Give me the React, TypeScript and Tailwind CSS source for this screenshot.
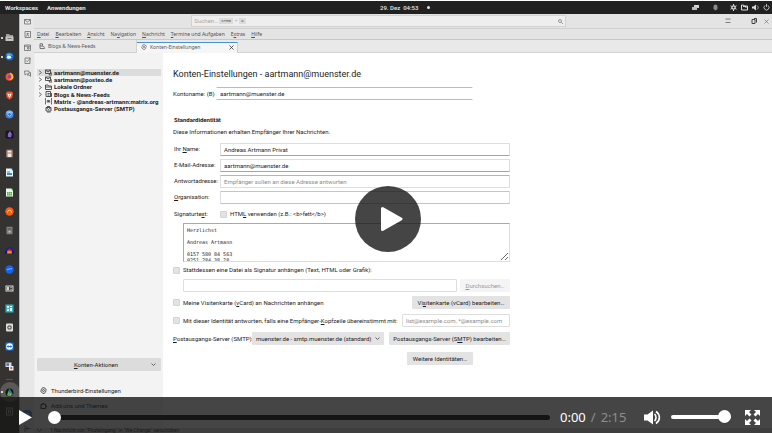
import React from "react";

const Key = ({ children }: { children: React.ReactNode }) => <span className="underline underline-offset-1">{children}</span>;

/* ---------- top panel of the desktop ---------- */

function TopBar() {
  return (
    <header className="mt-px flex h-[13px] shrink-0 items-center bg-[#212121] font-bold text-[#e6e6e6]">
      <div className="flex flex-[380] gap-[9px] pl-[5px]">
        <span>Workspaces</span>
        <span>Anwendungen</span>
      </div>
      <div className="flex items-center gap-[9px]">
        <span className="font-medium">29. Dez&nbsp; 04:53</span>
        <span className="size-[3px] rounded-full bg-[#e6e6e6]" />
      </div>
      <div className="flex flex-[344] items-center justify-end pr-[2px]">
        <svg className="mr-[13px] size-[7px]" viewBox="0 0 7 7" fill="#d5d5d5">
          <path d="M2 1h5v3H2z" />
          <path d="M0 3h5v3H0z" fill="#bbb" />
        </svg>
        <svg className="mr-[11px] size-[7px]" viewBox="0 0 7 7" fill="#8a8a8a">
          <path d="M3.500.5c1.400 0 2 1 2 2.500v2l-2 1.500-2-1.500V3C1.500 1.500 2.100.5 3.500.5z" />
        </svg>
        <svg className="mr-1 size-[7px]" viewBox="0 0 7 7" fill="none" stroke="#ddd">
          <circle cx="3.500" cy="3.500" r="1.600" strokeWidth="1.300" />
          <path d="M3.500 0v1.500M3.500 5.500V7M.5 1.800l1.300.7M5.200 4.500l1.300.7M.5 5.200l1.300-.7M5.200 2.500l1.300-.7" />
        </svg>
        <svg className="mr-1 size-[7px]" viewBox="0 0 7 7" fill="none" stroke="#ddd">
          <path d="M.5 1h2l.7 1h3.300v4h-6z" />
          <path d="M2 2.500h3v1.500" />
        </svg>
        <svg className="mr-1 size-[7px]" viewBox="0 0 7 7" fill="#ddd">
          <path d="M0 2.500h1.500L4 .5v6L1.500 4.500H0z" />
          <path d="M5 1.500c1.500 1 1.500 3 0 4" fill="none" stroke="#bbb" strokeWidth=".9" />
        </svg>
        <svg className="size-[7px]" viewBox="0 0 7 7" fill="none" stroke="#ccc" strokeWidth=".9">
          <path d="M2 1.500a2.500 2.500 0 1 0 3 0M3.500 0v3" />
        </svg>
      </div>
    </header>
  );
}

/* ---------- dock ---------- */

const dockIcons: React.ReactNode[] = [
  <g key="files"><path d="M1 1h3l1 1h3v6H1z" fill="#9b9b9b" /><path d="M.5 3.500h8v4.500h-8z" fill="#c4c4c4" /><path d="M2.500 5h4v1h-4z" fill="#777" /></g>,
  <g key="thunderbird"><circle cx="4.500" cy="4.500" r="4" fill="#1769c4" /><path d="M1 3C3 1 6 1 8 4 6 3 4 3 3 4z" fill="#4db0f5" /><ellipse cx="4" cy="5.200" rx="2.200" ry="1.600" fill="#eef5fb" /></g>,
  <g key="firefox"><circle cx="4.500" cy="4.800" r="3.900" fill="#f5532f" /><path d="M5 .5c2.500.8 4 3.500 3.200 5.500C7 8 4.500 8 4 7c2 0 3-1.500 2.500-3S4.500 2 5 .5z" fill="#ffc233" /><circle cx="4.300" cy="4.800" r="1.600" fill="#7b46c9" /></g>,
  <g key="brave"><path d="M2.200.5h4.600l1.400 1.700-1 4.300L4.500 8.700 1.800 6.500l-1-4.300z" fill="#f4502a" /><path d="M2.500 2.500l2 .6 2-.6-.5 2.300-1.500 2-1.500-2z" fill="#fff" /><path d="M3.800 3.800h1.400L4.500 5.500z" fill="#f4502a" /></g>,
  <g key="chromium"><circle cx="4.500" cy="4.500" r="4" fill="#3d83de" /><path d="M4.500 4.500L.8 3A4 4 0 0 1 8.200 3z" fill="#7cb7f8" /><circle cx="4.500" cy="4.500" r="1.900" fill="#e6f1fd" /><circle cx="4.500" cy="4.500" r="1.400" fill="#2b6fce" /></g>,
  <g key="obsidian"><rect x=".5" y=".5" width="8" height="8" rx="1.500" fill="#19171f" /><path d="M5 1l1.800 3-.8 3.500-3.300-.8.3-2.900z" fill="#8a63d9" /></g>,
  <g key="notes"><rect x="1" y=".5" width="7" height="8" rx="1" fill="#77716c" /><path d="M2.500 1.500h4v6.500h-4z" fill="#efe9e2" /><path d="M1 3.500h7v1H1z" fill="#d9705b" /></g>,
  <g key="writer"><path d="M1 .5h5.500L8 2v6.500H1z" fill="#e9f4fb" /><path d="M6 .5h2V3z" fill="#1d6ea5" /><path d="M2 3.500h3v1H2zM2 5h5v2H2z" fill="#3a8dbf" /></g>,
  <g key="calc"><path d="M1 .5h5.500L8 2v6.500H1z" fill="#ebf7e8" /><path d="M6 .5h2V3z" fill="#2f9a2f" /><path d="M2 4h5v3.500H2z" fill="#4cae48" /><path d="M3.500 4v3.500M5.300 4v3.500M2 5.500h5" stroke="#d6efd3" strokeWidth=".4" /></g>,
  <g key="podcast"><circle cx="4.500" cy="4.500" r="4.200" fill="#fd5d0d" /><path d="M2.500 5.500c0-3 4-3 4 0" stroke="#ffd2b5" fill="none" /></g>,
  <g key="device"><rect x="1.500" y=".8" width="6" height="7.500" rx=".5" fill="#81807e" /><path d="M2.500 2h4v2h-4z" fill="#666" /><circle cx="4.500" cy="5.700" r=".9" fill="#ccc" /></g>,
  <g key="audacity"><path d="M1 5.500C1 0 8 0 8 5.500" stroke="#1a1ab4" fill="none" strokeWidth="1.300" /><path d="M0 5h2v3H0zM7 5h2v3H7z" fill="#1414a0" /><path d="M2 5l2.500-2L7 5v3H2z" fill="#f42b16" /><path d="M2.500 5.500h4v1.200h-4z" fill="#ffd02c" /></g>,
  <g key="signal"><circle cx="4.500" cy="4.500" r="4.200" fill="#1464ef" /><path d="M2 5c1-1.500 3-.5 5-1.500" stroke="#8bc0ff" fill="none" /></g>,
  <g key="card"><path d="M.5 1.500h8v6h-8z" fill="#dadada" /><path d="M1.500 2.500h6v4h-6z" fill="#454545" /><path d="M2 3h2v3H2zM5 3.500h2v.6H5zM5 5h2v.6H5z" fill="#d6d6d6" /></g>,
  <g key="tiles"><rect x=".5" y=".5" width="8" height="8" fill="#34b2c4" /><path d="M2 2h2v2H2zM5 2h2v1H5zM5 4h2v3H5zM2 5h2v2H2z" fill="#e3fbff" /></g>,
  <g key="settings"><rect x="1" y=".5" width="7" height="8" rx="1" fill="#dedede" /><circle cx="4.500" cy="4.500" r="1.700" fill="none" stroke="#555" strokeWidth="1.200" /></g>,
  <g key="teamviewer"><rect x=".5" y=".5" width="8" height="8" rx="1" fill="#0c78e8" /><circle cx="4.500" cy="4.500" r="3.300" fill="#fff" /><path d="M1.500 4.500L3.500 3v1h2V3l2 1.500-2 1.500V5h-2v1z" fill="#0c78e8" /></g>,
  <g key="screens"><path d="M.5.5h6v4.500h-6z" fill="#d9dde1" /><path d="M1.300 1.300H4v2.500H1.300z" fill="#4a78a8" /><path d="M4 4h4.500v4.500H4z" fill="#eee" /><circle cx="6.300" cy="6" r="1.100" fill="#d94242" /></g>,
];

function Dock() {
  return (
    <nav aria-label="Dock" className="flex w-[19px] shrink-0 flex-col bg-[#353331] pt-[14px]">
      <div className="flex h-[348px] flex-col">
        {dockIcons.map((icon, i) => (
          <button key={i} aria-label={"App " + (i + 1)} className="flex flex-1 items-center">
            <span className={"mx-px size-[2px] rounded-full " + (i < 2 ? "bg-white" : "")} />
            <svg className="ml-px size-[9px]" viewBox="0 0 9 9">{icon}</svg>
          </button>
        ))}
      </div>
      <hr className="mx-[6px] mt-[3px] border-[#55524f]" />
      <button aria-label="Aktive App" className="mt-[2px] flex size-[20px] shrink-0 items-center rounded-full bg-[#5b5957]">
        <span className="mx-px size-[2px] rounded-full bg-white" />
        <svg className="ml-px size-[9px]" viewBox="0 0 9 9">
          <circle cx="4.500" cy="4.500" r="4" fill="#191919" />
          <path d="M4.500.5L2 7l2.500 1.500z" fill="#44bd52" />
          <path d="M4.500.5L8 6.500l-3.500 2z" fill="#2a7dc0" />
          <path d="M4.500 4l2 3-2 1z" fill="#d9a52b" />
        </svg>
      </button>
      <svg className="ml-[5px] mt-[5px] size-[9px] shrink-0" viewBox="0 0 9 9" fill="none" stroke="#aaa">
        <rect x="1.500" y="1" width="6" height="7" />
        <path d="M3.500 3h2v3h-2z" />
      </svg>
    </nav>
  );
}

/* ---------- mail window ---------- */

const spaceIcons = [
  "M.5 1.500h6v4.500h-6zM.5 1.500l3 2.500 3-2.500",
  "M1 .5h5.500v6H1zM2.300 5.500c0-2 2.500-2 2.500 0M3 2.300h1.200v1H3z",
  "M.5 1h6v5.500h-6zM.5 2.300h6M3.500 3.500h1.500v1.500H3.500z",
  "M1 1h5v5.500H1zM2.300 3.500l1 1.200L6.500.8",
  "M.5 1h4.500v3H2.500L1 5zM3 5h2l1.500 1.300V2.500H5.500",
];

function SpacesBar() {
  return (
    <nav aria-label="Bereiche" className="flex w-[15px] shrink-0 flex-col items-center border-l border-[#b9b6b3] bg-[#e7e7e7] pt-1">
      {spaceIcons.map((d, i) => (
        <button key={i} aria-label={"Bereich " + (i + 1)} className="mb-[6px] h-[7px]">
          <svg className="size-[7px]" viewBox="0 0 7 7" fill="none" stroke="#6d6d6d" strokeWidth=".8"><path d={d} /></svg>
        </button>
      ))}
      <button aria-label="Einstellungen" className="mb-[5px] mt-auto flex size-[10px] items-center justify-center rounded-sm bg-[#3f8ad6]">
        <svg className="size-[7px]" viewBox="0 0 7 7" fill="none" stroke="#fff"><circle cx="3.500" cy="3.500" r="2" /></svg>
      </button>
      <button aria-label="Ausblenden" className="mb-px h-[7px]">
        <svg className="size-[7px]" viewBox="0 0 7 7" fill="none" stroke="#555" strokeWidth=".8"><path d="M1 0v7M6.500 3.500H2M4 1.500l-2 2 2 2" /></svg>
      </button>
    </nav>
  );
}

const chromeText = "font-['Noto_Sans',sans-serif] text-[5px]";

function TitleBar() {
  return (
    <div className="flex h-[15px] shrink-0 items-center border-b border-[#cfcfd0] bg-[#e4e4e5]">
      <div className="flex-[158]" />
      <label className="flex h-3 flex-[370] items-center border border-[#d2d2d2] bg-[#eeeeee] px-[2px] text-[#a3a3a3]">
        <input aria-label="Suchen" placeholder="Suchen…" className="w-[25px] bg-transparent outline-none placeholder:text-[#a8a8a8]" />
        <kbd className="bg-[#dcdcdc] px-[2px] text-[4px] font-bold leading-[6px] text-[#777]">STRG</kbd>
        <span className="px-[2px] text-[4px]">+</span>
        <kbd className="bg-[#dcdcdc] px-[2px] text-[4px] font-bold leading-[6px] text-[#777]">K</kbd>
        <svg className="ml-auto size-[5px]" viewBox="0 0 5 5" fill="none" stroke="#777" strokeWidth=".7"><circle cx="2" cy="2" r="1.500" /><path d="M3.200 3.200L5 5" /></svg>
      </label>
      <div className="flex flex-[204] items-center justify-end gap-[7px] pr-[3px] text-[#555]">
        <button aria-label="Menü"><svg className="mr-[13px] size-[6px]" viewBox="0 0 6 6" stroke="#666" strokeWidth=".8"><path d="M.5 1h5M.5 4.500h5" /></svg></button>
        <button aria-label="Fenster"><svg className="size-[6px]" viewBox="0 0 6 6" fill="none" stroke="#444"><path d="M1 5.500v-4h3v4zM3 .5h2.500v4" /></svg></button>
        <button aria-label="Schließen"><svg className="size-[5px]" viewBox="0 0 5 5" stroke="#777" strokeWidth=".7"><path d="M.5.5l4 4M4.500.5l-4 4" /></svg></button>
      </div>
    </div>
  );
}

const menus: [string, string, string][] = [
  ["", "D", "atei"], ["", "B", "earbeiten"], ["", "A", "nsicht"], ["Na", "v", "igation"],
  ["", "N", "achricht"], ["", "T", "ermine und Aufgaben"], ["E", "x", "tras"], ["", "H", "ilfe"],
];

function MenuBar() {
  return (
    <div role="menubar" className={"flex h-[11px] shrink-0 items-center gap-[6px] border-b border-[#c8c8c9] bg-[#e4e4e5] pl-[3px] text-[#4f4f4f] " + chromeText}>
      {menus.map(([a, k, b]) => <button key={k + b} role="menuitem">{a}<Key>{k}</Key>{b}</button>)}
    </div>
  );
}

const Gear = ({ className }: { className: string }) => (
  <svg className={className} viewBox="0 0 8 8" fill="none" stroke="currentColor" strokeWidth=".8">
    <path d="M3 .8h2l.4 1 1.100.2.7 1.500-.7.800.2 1.200-1.300.8-.4 1H3.200l-.6-1-1.200-.5L.8 4.500l.7-.8L1.400 2.500l1.200-.7z" />
    <circle cx="4" cy="4" r="1.100" />
  </svg>
);

function TabBar() {
  return (
    <div role="tablist" className={"flex h-[13px] shrink-0 items-stretch bg-[#e9e9ea] text-[#555] " + chromeText}>
      <button role="tab" className="flex w-[103px] items-center gap-[3px] border-b border-r border-[#d2d2d3] pl-[5px]">
        <svg className="size-[6px]" viewBox="0 0 6 6" fill="none" stroke="#666" strokeWidth=".9"><path d="M1 5.500V.8h2.500v2M1 5.500h4.500c0-1.500-1-2.500-2.500-2.500M1 3h2" /></svg>
        Blogs &amp; News-Feeds
      </button>
      <div role="tab" aria-selected="true" className="mt-[2px] flex w-[101px] items-center gap-[3px] border-r border-t border-r-[#d2d2d3] border-t-[#4a90d9] bg-[#f6f6f6] pb-[2px] pl-1 pr-[3px]">
        <Gear className="size-[6px] text-[#555]" />
        Konten-Einstellungen
        <button aria-label="Tab schließen" className="ml-auto"><svg className="size-[5px]" viewBox="0 0 5 5" stroke="#333" strokeWidth=".8"><path d="M.5.5l4 4M4.500.5l-4 4" /></svg></button>
      </div>
      <div className="flex-1 border-b border-[#d2d2d3]" />
    </div>
  );
}

const accounts: [string, boolean, string][] = [
  ["aartmann@muenster.de", true, "M.5 1h5v3.500h-5zM.5 1L3 3l2.500-2M5 4h2v2H4z"],
  ["aartmann@posteo.de", true, "M.5 1h5v3.500h-5zM.5 1L3 3l2.500-2M5 4h2v2H4z"],
  ["Lokale Ordner", true, "M.5 1h2.500l.5 1H6.500v3.500h-6zM.5 3h6"],
  ["Blogs & News-Feeds", true, "M1 .5h4.500v5H1zM2.500 2.500h2M2.500 4h2M6.500 2v3.500H3"],
  ["Matrix - @andreas-artmann:matrix.org", false, "M1 .5H.3v5.500H1M6 .5h.7v5.500H6M2.300 4.500v-2h1.200v2M3.500 2.500h1.200v2"],
  ["Postausgangs-Server (SMTP)", false, "M1 1.500h5v3.500H1zM1 1.500l2.500 2L6 1.500M2 .5h3M2 6h3.500"],
];

function AccountPane() {
  return (
    <aside className="flex w-[129px] shrink-0 flex-col border-l border-[#eee] bg-[#f3f3f3] pt-4 text-[#222]">
      <ul className="grid h-11 grid-rows-6 px-[2px] font-bold">
        {accounts.map(([name, tree, icon], i) => (
          <li key={name} className={"flex min-h-0 items-center leading-[6px] " + (i === 0 ? "bg-[#dcdcdc]" : "")}>
            <svg className="ml-px size-[5px]" viewBox="0 0 5 5" fill="none" stroke="#555" strokeWidth=".8">{tree && <path d="M1 .5l2.500 2L1 4.500" />}</svg>
            <svg className="mx-[2px] size-[7px]" viewBox="0 0 7 7" fill="none" stroke="#444" strokeWidth=".9"><path d={icon} /></svg>
            <span className="whitespace-nowrap">{name}</span>
          </li>
        ))}
      </ul>
      <button className="mx-[2px] mb-4 mt-auto flex h-[13px] shrink-0 items-center rounded-[1px] bg-[#dcdcdc] pr-[5px]">
        <span className="flex-1 pl-1"><Key>K</Key>onten-Aktionen</span>
        <svg className="size-[5px]" viewBox="0 0 5 5" fill="none" stroke="#444" strokeWidth=".8"><path d="M.5 1.500l2 2 2-2" /></svg>
      </button>
      <button className="mb-2 flex h-[7px] items-center gap-1 pl-[5px]"><Gear className="size-[7px]" />Thunderbird-Einstellungen</button>
      <button className="mb-[19px] flex h-[7px] items-center gap-1 pl-[5px]">
        <svg className="size-[7px]" viewBox="0 0 7 7" fill="none" stroke="#333"><path d="M1 2.500h1.500v-1h1.500v1h1.500v1.500h1v1h-1v1.500H1z" /></svg>
        Add-ons und Themes
      </button>
    </aside>
  );
}

/* ---------- account settings form ---------- */

const fieldClass = "h-[13px] min-w-0 flex-1 rounded-[1px] border border-[#dedede] bg-white px-[3px] outline-none placeholder:text-[#8c8c8c]";
const buttonClass = "h-[13px] shrink-0 rounded-[1px] bg-[#e3e3e3] px-1 text-center";
const checkClass = "size-[7px] shrink-0 appearance-none rounded-[1px] border border-[#d4d4d4] bg-[#e3e3e3] checked:bg-[#4a90d9]";

function Field({ id, label, edge, value, placeholder }: { id: string; label: React.ReactNode; edge: string; value?: string; placeholder?: string }) {
  return (
    <div className="flex h-4 items-center">
      <label htmlFor={id} className="w-[47px] shrink-0 whitespace-nowrap pl-px">{label}</label>
      <input id={id} defaultValue={value} placeholder={placeholder} className={fieldClass + " " + edge} />
    </div>
  );
}

function Settings() {
  return (
    <main className="min-w-0 flex-1 bg-white pl-[10px] pt-[15px] text-[#1c1c1c]">
      <h1 className="text-[9px] leading-[12px]">Konten-Einstellungen - aartmann@muenster.de</h1>
      <form className="w-[337px] max-w-full" onSubmit={(e) => e.preventDefault()}>
        <div className="mt-[7px] flex w-[300px] items-center">
          <label htmlFor="konto" className="w-[43px] shrink-0 whitespace-nowrap">Kontoname: (B)</label>
          <input id="konto" defaultValue="aartmann@muenster.de" className={fieldClass + " border-x-transparent border-y-[#bbb]"} />
        </div>
        <h2 className="mt-4 pl-px font-bold leading-[8px]">Standardidentität</h2>
        <p className="mb-[5px] mt-1 leading-[8px]">Diese Informationen erhalten Empfänger Ihrer Nachrichten.</p>
        <Field id="name" label={<>Ihr <Key>N</Key>ame:</>} edge="border-b-[#a5a5a5]" value="Andreas Artmann Privat" />
        <Field id="mail" label="E-Mail-Adresse:" edge="border-b-[#a5a5a5]" value="aartmann@muenster.de" />
        <Field id="reply" label="Antwortadresse:" edge="border-t-[#b5b5b5]" placeholder="Empfänger sollen an diese Adresse antworten" />
        <Field id="org" label={<><Key>O</Key>rganisation:</>} edge="border-y-[#c4c4c4]" />
        <div className="flex h-[18px] items-center">
          <label htmlFor="sig" className="w-[47px] shrink-0 pl-px">Signaturte<Key>x</Key>t:</label>
          <input id="html" type="checkbox" className={checkClass} />
          <label htmlFor="html" className="pl-[3px]">HTM<Key>L</Key> verwenden (z.B.: &lt;b&gt;fett&lt;/b&gt;)</label>
        </div>
        <textarea
          id="sig"
          className="ml-[10px] block h-[39px] w-[327px] resize overflow-hidden border border-[#dedede] border-l-[#aaa] border-t-[#aaa] px-[3px] pt-[3px] font-['DejaVu_Sans_Mono','Liberation_Mono',monospace] text-[5px] leading-[6px] outline-none"
          defaultValue={"Herzlichst\n\nAndreas Artmann\n\n0157 580 84 563\n0251 284 38 28"}
        />
        <div className="mt-1 flex h-2 items-center gap-[3px]">
          <input id="file" type="checkbox" className={checkClass} />
          <label htmlFor="file">Stattdessen eine Datei als Signatur anhängen (Text, HTML oder Grafik):</label>
        </div>
        <div className="mt-[5px] flex gap-[3px] pl-[10px]">
          <input aria-label="Signaturdatei" className={fieldClass} />
          <button disabled className="h-[13px] w-[50px] shrink-0 rounded-[1px] bg-[#f4f4f4] text-[#999]"><Key>D</Key>urchsuchen…</button>
        </div>
        <div className="mt-1 flex items-center gap-[3px]">
          <input id="vcard" type="checkbox" className={checkClass} />
          <label htmlFor="vcard" className="flex-1">Meine Visitenkarte (<Key>v</Key>Card) an Nachrichten anhängen</label>
          <button className={buttonClass + " w-[98px]"}>Vi<Key>s</Key>itenkarte (vCard) bearbeiten…</button>
        </div>
        <div className="mt-[5px] flex items-center gap-[3px]">
          <input id="match" type="checkbox" className={checkClass} />
          <label htmlFor="match" className="w-[216px] shrink-0 whitespace-nowrap">Mit dieser Identität antworten, falls eine Empfänger-<Key>K</Key>opfzeile übereinstimmt mit:</label>
          <input aria-label="Adressen" placeholder="list@example.com, *@example.com" className={fieldClass} />
        </div>
        <div className="mt-[5px] flex items-center">
          <label htmlFor="smtp" className="w-[79px] shrink-0 whitespace-nowrap"><Key>P</Key>ostausgangs-Server (SMTP):</label>
          <div className="relative min-w-0 flex-1">
            <select id="smtp" className="block h-[13px] w-full appearance-none rounded-[1px] bg-[#e3e3e3] px-1">
              <option>muenster.de - smtp.muenster.de (standard)</option>
            </select>
            <svg className="pointer-events-none absolute right-1 top-1 size-[5px]" viewBox="0 0 5 5" fill="none" stroke="#444" strokeWidth=".8"><path d="M.5 1.500l2 2 2-2" /></svg>
          </div>
          <button className={buttonClass + " ml-[5px] w-[121px]"}>Postausgangs-Server (S<Key>M</Key>TP) bearbeiten…</button>
        </div>
        <button className={buttonClass + " ml-[234px] mt-[7px] block w-[66px]"}>Weitere Identitäten…</button>
      </form>
    </main>
  );
}

/* ---------- video player overlay ---------- */

function PlayerControls() {
  return (
    <div className="absolute inset-x-0 bottom-0 flex h-9 items-center bg-[rgba(23,23,23,0.8)] pl-[19px] pr-3 pt-1">
      <button aria-label="Abspielen">
        <svg className="h-[15px] w-[13px]" viewBox="0 0 13 15" fill="#fff"><path d="M0 0l13 7.500L0 15z" /></svg>
      </button>
      <input
        type="range" aria-label="Position" defaultValue={0}
        className="ml-4 h-[13px] min-w-0 flex-1 appearance-none bg-transparent [&::-webkit-slider-runnable-track]:h-[5px] [&::-webkit-slider-runnable-track]:rounded-full [&::-webkit-slider-runnable-track]:bg-[#151515] [&::-webkit-slider-thumb]:-mt-1 [&::-webkit-slider-thumb]:size-[13px] [&::-webkit-slider-thumb]:appearance-none [&::-webkit-slider-thumb]:rounded-full [&::-webkit-slider-thumb]:bg-white"
      />
      <div className="ml-[10px] flex w-[84px] shrink-0 gap-[5px] whitespace-nowrap font-['Noto_Sans',sans-serif] text-[13px] leading-4 text-[#8d8d8d]">
        <span className="text-white">0:00</span>
        <span>/</span>
        <span>2:15</span>
      </div>
      <button aria-label="Ton">
        <svg className="h-[15px] w-[17px]" viewBox="0 0 17 15" fill="#fff">
          <path d="M0 4.500h3.500L9 .5v14L3.500 10.500H0z" />
          <path d="M10.500 4c2 1.800 2 5.200 0 7M12 1.500c4.500 3 4.500 9 0 12" fill="none" stroke="#fff" strokeWidth="1.600" />
        </svg>
      </button>
      <input
        type="range" aria-label="Lautstärke" defaultValue={100}
        className="ml-[10px] h-[13px] w-[60px] shrink-0 appearance-none bg-transparent [&::-webkit-slider-runnable-track]:h-1 [&::-webkit-slider-runnable-track]:rounded-full [&::-webkit-slider-runnable-track]:bg-white [&::-webkit-slider-thumb]:-mt-[5px] [&::-webkit-slider-thumb]:size-[13px] [&::-webkit-slider-thumb]:appearance-none [&::-webkit-slider-thumb]:rounded-full [&::-webkit-slider-thumb]:bg-white [&::-webkit-slider-thumb]:shadow"
      />
      <button aria-label="Vollbild" className="ml-[14px]">
        <svg className="size-[15px]" viewBox="0 0 15 15" fill="#fff">
          <path d="M0 0h6L4 2l2.500 2.500-2 2L2 4 0 6zM15 0v6l-2-2-2.500 2.500-2-2L11 2 9 0zM0 15V9l2 2 2.500-2.500 2 2L4 13l2 2zM15 15H9l2-2-2.500-2.500 2-2L13 11l2-2z" />
        </svg>
      </button>
    </div>
  );
}

export default function App() {
  return (
    <div className="relative flex h-screen flex-col overflow-hidden bg-white font-['Roboto','Noto_Sans',sans-serif] text-[6px] leading-[8px] text-[#222]">
      <TopBar />
      <div className="flex min-h-0 flex-1">
        <Dock />
        <SpacesBar />
        <div className="flex min-w-0 flex-1 flex-col">
          <TitleBar />
          <MenuBar />
          <TabBar />
          <div className="flex min-h-0 flex-1">
            <AccountPane />
            <Settings />
          </div>
          <footer className="flex h-[5px] shrink-0 items-center gap-2 bg-[#d9d9da] pl-[3px] text-[5px] leading-[5px] text-[#333]">
            <svg className="size-[5px]" viewBox="0 0 5 5" fill="none" stroke="#555"><path d="M0 1l2.500 2.500L5 1" /></svg>
            1 Nachricht von "Posteingang" in "We Change" verschoben
          </footer>
        </div>
      </div>
      <button aria-label="Video abspielen" className="absolute left-1/2 top-1/2 flex size-[66px] -translate-x-[31px] -translate-y-[31px] items-center justify-center rounded-full bg-[rgba(23,23,23,0.8)]">
        <svg className="ml-[7px] h-6 w-[22px]" viewBox="0 0 22 24" fill="#fff" stroke="#fff" strokeWidth="3" strokeLinejoin="round"><path d="M1.500 1.500L20 12 1.500 22.500z" /></svg>
      </button>
      <PlayerControls />
    </div>
  );
}
